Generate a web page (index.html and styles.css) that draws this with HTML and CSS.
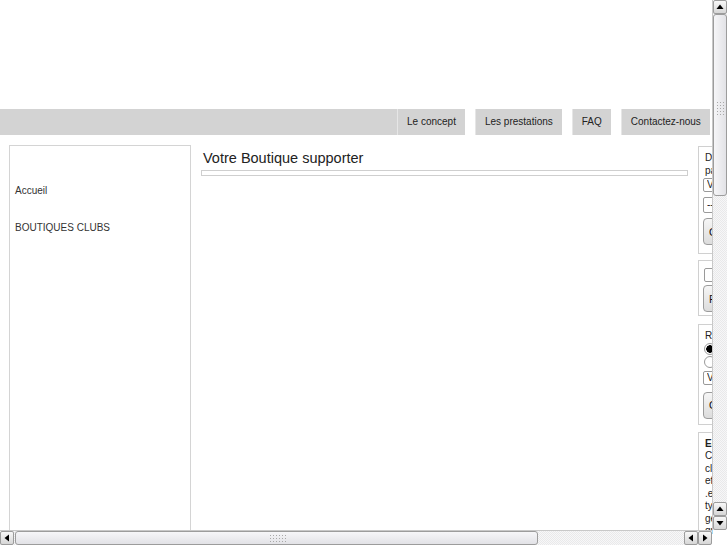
FILE: index.html
```html
<!DOCTYPE html>
<html lang="fr">
<head>
<meta charset="utf-8">
<title>Votre Boutique supporter</title>
<link rel="stylesheet" href="styles.css">
</head>
<body>
<div class="page">
  <div class="header"></div>
  <div class="nav">
    <div class="nav-fill"></div>
    <a class="tab" href="#">Le concept</a>
    <a class="tab" href="#">Les prestations</a>
    <a class="tab" href="#">FAQ</a>
    <a class="tab" href="#">Contactez-nous</a>
  </div>
  <div class="cols">
    <div class="sidebar">
      <a class="side-link" href="#">Accueil</a>
      <a class="side-link" href="#">BOUTIQUES CLUBS</a>
    </div>
    <div class="main">
      <h1 class="title">Votre Boutique supporter</h1>
      <div class="title-bar"></div>
    </div>
    <div class="right">
      <div class="box box1">
        <p class="txt">Découvrez nos boutiques<br>par club :</p>
        <select class="sel"><option>Votre club</option></select>
        <select class="sel sel2"><option>-- Choisir --</option></select>
        <button class="btn" type="button">OK</button>
      </div>
      <div class="box box2">
        <input class="chk" type="checkbox">
        <button class="btn btn2" type="button">Personnaliser</button>
      </div>
      <div class="box box3">
        <p class="txt">Rechercher :</p>
        <input class="rad" type="radio" name="r" checked>
        <input class="rad" type="radio" name="r">
        <select class="sel sel3"><option>Votre club</option></select>
        <button class="btn btn3" type="button">OK</button>
      </div>
      <div class="box box4">
        <p class="txt"><b>Ecussons et blasons</b><br>Cet espace est destiné aux<br>clubs qui souhaitent proposer<br>et vendre leurs produits.<br>.eps, .ai, .pdf : tous les<br>types de fichiers sont<br>gérés par nos équipes<br>graphiques.</p>
      </div>
    </div>
  </div>
</div>

<div class="vscroll">
  <div class="sb-btn sb-up-top"><svg viewBox="0 0 8 8" width="8" height="8"><path d="M4 1.5 L7.5 6 L0.5 6 Z" fill="#000"/></svg></div>
  <div class="vtrack">
    <div class="vthumb"><div class="grip vgrip"></div></div>
  </div>
  <div class="sb-btn"><svg viewBox="0 0 8 8" width="8" height="8"><path d="M4 1.5 L7.5 6 L0.5 6 Z" fill="#000"/></svg></div>
  <div class="sb-btn"><svg viewBox="0 0 8 8" width="8" height="8"><path d="M0.5 2 L7.5 2 L4 6.5 Z" fill="#000"/></svg></div>
</div>
<div class="hscroll">
  <div class="sb-btn hbtn"><svg viewBox="0 0 8 8" width="8" height="8"><path d="M1.5 4 L6 0.5 L6 7.5 Z" fill="#000"/></svg></div>
  <div class="htrack">
    <div class="hthumb"><div class="grip hgrip"></div></div>
  </div>
  <div class="sb-btn hbtn"><svg viewBox="0 0 8 8" width="8" height="8"><path d="M1.5 4 L6 0.5 L6 7.5 Z" fill="#000"/></svg></div>
  <div class="sb-btn hbtn"><svg viewBox="0 0 8 8" width="8" height="8"><path d="M2 0.5 L6.5 4 L2 7.5 Z" fill="#000"/></svg></div>
</div>
<div class="sb-corner"></div>
</body>
</html>
```
FILE: styles.css
```css
html {
  overflow: hidden;
}
body {
  margin: 0;
  background: #fff;
  font-family: "Liberation Sans", Arial, sans-serif;
  color: #333;
}
.page {
  width: 911px;
}
.header {
  height: 109px;
}
.nav {
  display: flex;
  height: 26px;
}
.nav-fill {
  width: 397px;
  background: #d3d3d3;
}
.tab {
  display: block;
  background: #d3d3d3;
  border-left: 1px solid #e6e6e6;
  padding: 0 9px;
  margin-left: 10px;
  font-size: 10px;
  line-height: 26px;
  color: #222;
  text-decoration: none;
  white-space: nowrap;
}
.nav-fill + .tab {
  margin-left: 0;
}
.cols {
  display: flex;
  align-items: flex-start;
  margin-top: 10px;
}
.sidebar {
  margin-left: 9px;
  width: 182px;
  height: 800px;
  border: 1px solid #d4d4d4;
  padding-top: 39px;
  box-sizing: border-box;
}
.side-link {
  display: block;
  padding-left: 5px;
  font-size: 10px;
  line-height: 12px;
  margin-bottom: 25px;
  color: #333;
  text-decoration: none;
}
.main {
  margin-left: 10px;
  width: 488px;
}
.title {
  margin: 0;
  padding: 4px 0 0 2px;
  font-size: 14.5px;
  line-height: 18px;
  font-weight: normal;
  color: #222;
}
.title-bar {
  margin-top: 3px;
  width: 485px;
  height: 4px;
  border: 1px solid #cfcfcf;
}
.right {
  margin-left: 9px;
  width: 200px;
  display: flex;
  flex-direction: column;
  margin-top: 1px;
}
.box {
  border: 1px solid #d0d0d0;
  padding: 5px 4px 8px 4px;
  display: flex;
  flex-direction: column;
  align-items: flex-start;
  font-size: 10px;
  line-height: 12.5px;
}
.txt {
  margin: 0 0 0 2px;
  color: #222;
}
.sel {
  appearance: none;
  -webkit-appearance: none;
  box-sizing: border-box;
  font-family: "Liberation Sans", Arial, sans-serif;
  font-size: 10px;
  height: 14px;
  line-height: 12px;
  padding: 0 3px;
  margin: 1px 0 0 0;
  width: 120px;
  border: 1px solid #9a9a9a;
  border-radius: 2px;
  background: #fff;
  color: #222;
}
.sel2 {
  margin-top: 5px;
  height: 16px;
}
.btn {
  appearance: none;
  -webkit-appearance: none;
  box-sizing: border-box;
  margin-top: 5px;
  height: 27px;
  padding: 0 5px;
  font-family: "Liberation Sans", Arial, sans-serif;
  font-size: 11px;
  color: #111;
  border: 1px solid #9c9c9c;
  border-radius: 4px;
  background: linear-gradient(#f6f6f6, #dcdcdc);
}
.box2 {
  margin-top: 6px;
  padding-top: 7px;
  padding-bottom: 3px;
}
.chk {
  appearance: none;
  -webkit-appearance: none;
  box-sizing: border-box;
  margin: 0 0 0 1px;
  width: 14px;
  height: 14px;
  border: 1px solid #9a9a9a;
  border-radius: 2px;
  background: #fff;
}
.btn2 {
  margin-top: 3px;
}
.box3 {
  margin-top: 8px;
  padding-top: 5px;
  padding-bottom: 5px;
}
.rad {
  appearance: none;
  -webkit-appearance: none;
  box-sizing: border-box;
  margin: 0 0 0 1px;
  width: 12px;
  height: 12px;
  border: 1px solid #9a9a9a;
  border-radius: 50%;
  background: #fff;
}
.rad:checked {
  background: radial-gradient(circle, #000 0 3.5px, #fff 4px);
}
.rad + .rad {
  margin-top: 1px;
}
.sel3 {
  margin-top: 3px;
}
.btn3 {
  margin-top: 7px;
}
.box4 {
  margin-top: 7px;
  padding-top: 5px;
  height: 200px;
}

/* simulated window scrollbars */
.vscroll {
  position: fixed;
  top: 0;
  right: 0;
  width: 14px;
  height: 530px;
  display: flex;
  flex-direction: column;
  background: repeating-conic-gradient(#e9e9ea 0 25%, #f7f7f8 0 50%) 0 0 / 2px 2px;
  border-left: 1px solid #c8c8c8;
}
.sb-btn {
  flex: none;
  width: 14px;
  height: 14px;
  box-sizing: border-box;
  border: 1px solid #9c9c9c;
  border-radius: 2px;
  background: linear-gradient(#f8f8f8, #d6d6d6);
  display: flex;
  align-items: center;
  justify-content: center;
}
.vtrack {
  flex: 1;
  position: relative;
}
.vthumb {
  position: absolute;
  top: 0;
  left: 0;
  width: 14px;
  height: 182px;
  box-sizing: border-box;
  border: 1px solid #9c9c9c;
  border-radius: 3px;
  background: linear-gradient(to right, #f6f6f8, #e2e2e6);
}
.grip {
  position: absolute;
  background: radial-gradient(circle, #a8a8a8 0 0.8px, transparent 1px) 0 0 / 3px 3px;
}
.vgrip {
  left: 2px;
  top: 86px;
  width: 9px;
  height: 14px;
}
.hscroll {
  position: fixed;
  left: 0;
  bottom: 0;
  width: 712px;
  height: 14px;
  display: flex;
  background: repeating-conic-gradient(#e9e9ea 0 25%, #f7f7f8 0 50%) 0 0 / 2px 2px;
  border-top: 1px solid #c8c8c8;
}
.hbtn {
  width: 14px;
}
.htrack {
  flex: 1;
  position: relative;
}
.hthumb {
  position: absolute;
  left: 1px;
  top: 0;
  width: 523px;
  height: 14px;
  box-sizing: border-box;
  border: 1px solid #9c9c9c;
  border-radius: 3px;
  background: linear-gradient(#f6f6f8, #e2e2e6);
}
.hgrip {
  left: 253px;
  top: 2px;
  width: 17px;
  height: 9px;
}
.sb-corner {
  position: fixed;
  right: 0;
  bottom: 0;
  width: 14px;
  height: 15px;
  background: #fff;
}
```
